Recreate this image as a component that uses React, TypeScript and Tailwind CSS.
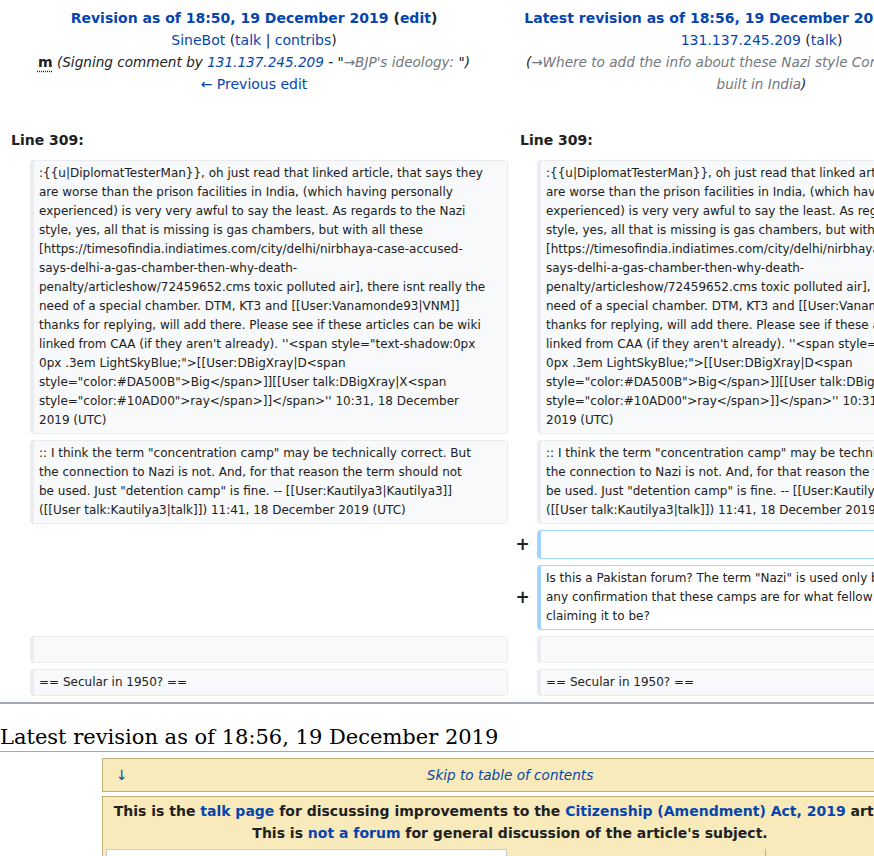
import React from 'react';

type Box = { lines?: string[]; minH?: string };

const link = 'text-[#0645ad]';

function Lines({ lines }: { lines?: string[] }) {
  return (
    <>
      {(lines ?? []).map((l, i) => (
        <div key={i} className="whitespace-pre">
          {l}
        </div>
      ))}
    </>
  );
}

function Context({ lines }: Box) {
  return (
    <div className="min-h-[27px] rounded-[4px] border border-l-4 border-[#eaecf0] bg-[#f8f9fa] py-[3px] pl-[5px] pr-[4px] text-[12px] leading-[19px] text-[#202122]">
      <Lines lines={lines} />
    </div>
  );
}

function Added({ lines, minH = 'min-h-[27px]' }: Box) {
  return (
    <div className={`${minH} overflow-hidden rounded-[4px] border border-l-4 border-[#a3d3ff] bg-white py-[3px] pl-[5px] pr-[4px] text-[12px] leading-[19px] text-[#202122]`}>
      <Lines lines={lines} />
    </div>
  );
}

function Plus() {
  return <div className="flex items-center justify-center text-[17px] font-bold text-[#202122]">+</div>;
}

const firstComment = [
  ':{{u|DiplomatTesterMan}}, oh just read that linked article, that says they',
  'are worse than the prison facilities in India, (which having personally',
  'experienced) is very very awful to say the least. As regards to the Nazi',
  'style, yes, all that is missing is gas chambers, but with all these',
  '[https://timesofindia.indiatimes.com/city/delhi/nirbhaya-case-accused-',
  'says-delhi-a-gas-chamber-then-why-death-',
  'penalty/articleshow/72459652.cms toxic polluted air], there isnt really the',
  'need of a special chamber. DTM, KT3 and [[User:Vanamonde93|VNM]]',
  'thanks for replying, will add there. Please see if these articles can be wiki',
  'linked from CAA (if they aren\'t already). \'\'<span style="text-shadow:0px',
  '0px .3em LightSkyBlue;">[[User:DBigXray|D<span',
  'style="color:#DA500B">Big</span>]][[User talk:DBigXray|X<span',
  'style="color:#10AD00">ray</span>]]</span>\'\' 10:31, 18 December',
  '2019 (UTC)',
];

const secondComment = [
  ':: I think the term "concentration camp" may be technically correct. But',
  'the connection to Nazi is not. And, for that reason the term should not',
  'be used. Just "detention camp" is fine. -- [[User:Kautilya3|Kautilya3]]',
  '([[User talk:Kautilya3|talk]]) 11:41, 18 December 2019 (UTC)',
];

const newComment = [
  'Is this a Pakistan forum? The term "Nazi" is used only by Pakistan. Is there',
  'any confirmation that these camps are for what fellow editors here are',
  'claiming it to be?',
];

export default function App() {
  return (
    <div className="h-[856px] w-[874px] overflow-hidden bg-white font-['DejaVu_Sans',sans-serif] text-[#202122]">
      <div className="w-[1020px]">
        {/* revision headers */}
        <div className="grid grid-cols-[508px_507px] pt-[7px] text-[14px] leading-[22px]">
          <div className="text-center">
            <div className="font-bold">
              <a className={link}>Revision as of 18:50, 19 December 2019</a> (<a className={link}>edit</a>)
            </div>
            <div>
              <a className={link}>SineBot</a> (<a className={link}>talk</a> | <a className={link}>contribs</a>)
            </div>
            <div>
              <abbr className="font-bold no-underline">
                <span className="underline decoration-dotted underline-offset-[4px]">m</span>
              </abbr>{' '}
              <span className="text-[13.6px] italic">
                (Signing comment by <a className={link}>131.137.245.209</a> - "
                <span className="text-[#72777d]">→BJP's ideology: </span>")
              </span>
            </div>
            <div>
              <a className={link}>← Previous edit</a>
            </div>
          </div>
          <div className="text-center">
            <div className="whitespace-nowrap font-bold">
              <a className={link}>Latest revision as of 18:56, 19 December 2019</a> (<a className={link}>edit</a>) (
              <a className={link}>undo</a>)
            </div>
            <div>
              <a className={link}>131.137.245.209</a> (<a className={link}>talk</a>)
            </div>
            <div className="text-[13.6px] italic">
              <div className="whitespace-nowrap">
                (<span className="text-[#72777d]">→Where to add the info about these Nazi style Concentration camps</span>
              </div>
              <div>
                <span className="text-[#72777d]">built in India</span>)
              </div>
            </div>
          </div>
        </div>

        {/* line numbers */}
        <div className="mt-[34px] grid grid-cols-[508px_507px] text-[14px] font-bold leading-[22px]">
          <div className="pl-[11px]">Line 309:</div>
          <div className="pl-[12px]">Line 309:</div>
        </div>

        {/* diff rows */}
        <div className="mt-[9px] grid grid-cols-[30px_478px_29px_478px] gap-y-[6px]">
          <div />
          <Context lines={firstComment} />
          <div />
          <Context lines={firstComment} />

          <div />
          <Context lines={secondComment} />
          <div />
          <Context lines={secondComment} />

          <div className="col-span-2" />
          <Plus />
          <Added minH="min-h-[29px]" />

          <div className="col-span-2" />
          <Plus />
          <Added lines={newComment} />

          <div />
          <Context />
          <div />
          <Context />

          <div />
          <Context lines={['== Secular in 1950? ==']} />
          <div />
          <Context lines={['== Secular in 1950? ==']} />
        </div>

        <div className="mt-[6px] border-t-2 border-[#a2a9b1]" />

        <h2 className="mt-[20px] border-b border-[#a2a9b1] font-['DejaVu_Serif',serif] text-[21px] leading-[27px] text-black">
          Latest revision as of 18:56, 19 December 2019
        </h2>

        {/* talk page banners */}
        <div className="mx-[102px] mt-[6px]">
          <div className="flex h-[34px] items-center border border-[#c0af79] bg-[#f8eaba] text-[14px]">
            <span className="w-[40px] pl-[13px] text-[#0645ad]">↓</span>
            <span className="flex-1 text-center text-[13.6px] italic text-[#0645ad]">Skip to table of contents</span>
            <span className="w-[40px]" />
          </div>
          <div className="mt-[4px] border border-[#c0af79] bg-[#f8eaba] pt-[3px] text-center text-[14px] font-bold leading-[22px]">
            <div>
              This is the <a className={link}>talk page</a> for discussing improvements to the{' '}
              <a className={link}>Citizenship (Amendment) Act, 2019</a> article.
            </div>
            <div>
              This is <a className={link}>not a forum</a> for general discussion of the article's subject.
            </div>
            <div className="mt-[5px] flex h-[20px]">
              <div className="ml-[3px] w-[401px] border border-[#c8ccd1] bg-white" />
              <div className="w-[259px] border-r border-[#c0af79]" />
            </div>
          </div>
        </div>
      </div>
    </div>
  );
}
